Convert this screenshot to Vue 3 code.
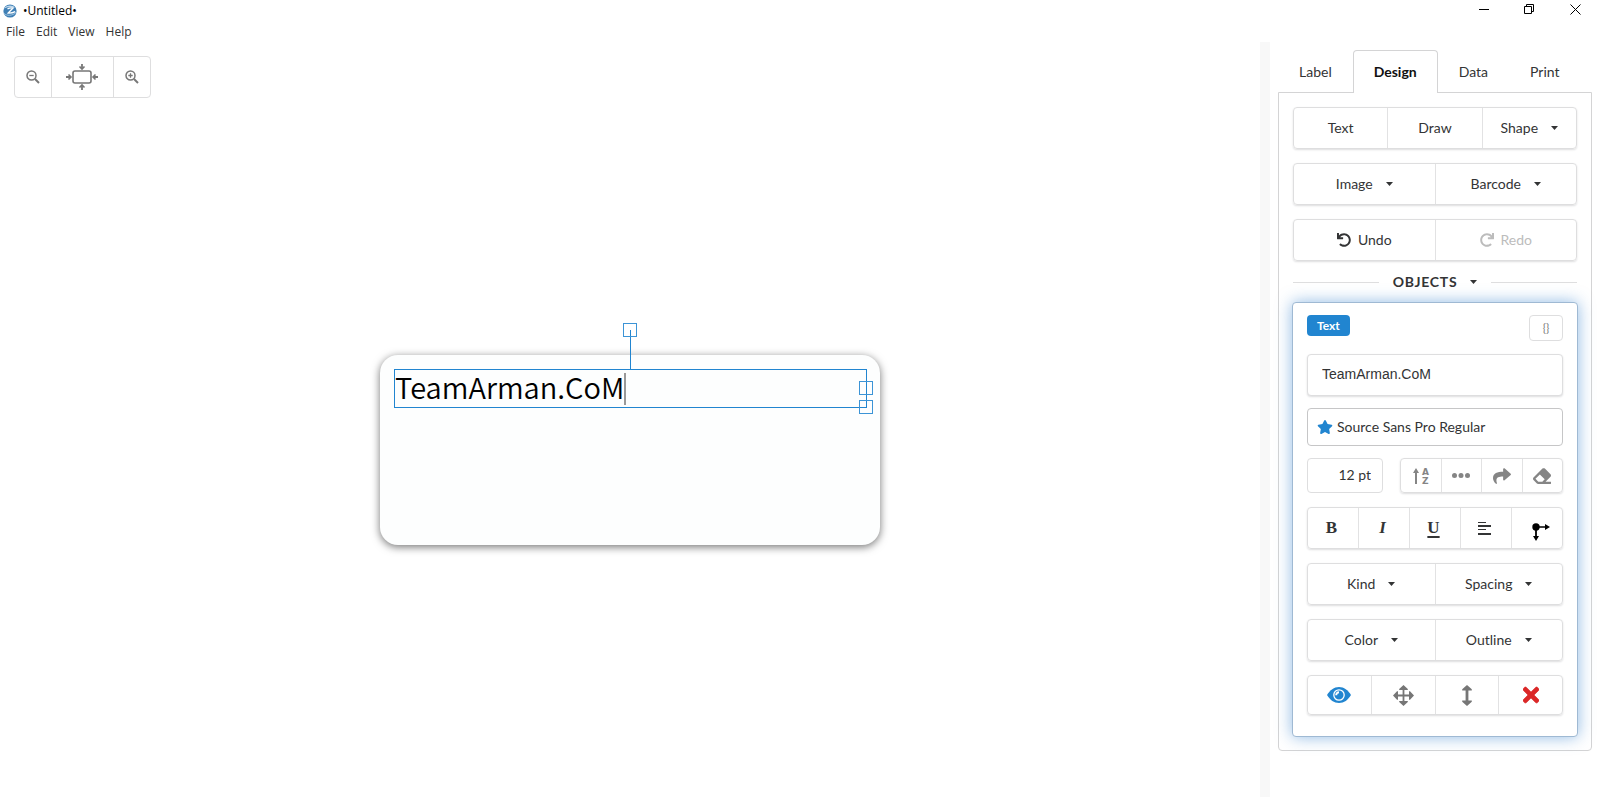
<script setup>
import { ref } from 'vue'

const menus = ['File', 'Edit', 'View', 'Help']
const tabs = ['Label', 'Design', 'Data', 'Print']
const activeTab = ref('Design')

const text = ref('TeamArman.CoM')
const font = ref('Source Sans Pro Regular')
const size = ref('12 pt')

const insertRows = [
  [
    { name: 'Text' },
    { name: 'Draw' },
    { name: 'Shape', menu: true }
  ],
  [
    { name: 'Image', menu: true },
    { name: 'Barcode', menu: true }
  ]
]

const styleRows = [
  ['Kind', 'Spacing'],
  ['Color', 'Outline']
]

const undoPath = 'M212.333 224.333H12c-6.627 0-12-5.373-12-12V12C0 5.373 5.373 0 12 0h48c6.627 0 12 5.373 12 12v78.112C117.773 39.279 184.26 7.47 258.175 8.007c136.906.994 246.448 111.623 246.157 248.532C504.041 393.258 393.12 504 256.333 504c-64.089 0-122.496-24.313-166.51-64.215-5.099-4.622-5.334-12.554-.467-17.42l33.967-33.967c4.474-4.474 11.662-4.717 16.401-.525C170.76 415.336 211.58 432 256.333 432c97.268 0 176-78.716 176-176 0-97.267-78.716-176-176-176-58.496 0-110.28 28.476-142.274 72.333h98.274c6.627 0 12 5.373 12 12v48c0 6.627-5.373 12-12 12z'
</script>

<template>
  <div class="app">
    <header class="titlebar">
      <svg class="logo" width="14" height="14" viewBox="0 0 14 14">
        <circle cx="7" cy="7" r="6.6" fill="#3f7fb5" />
        <path d="M1 4.500C3 1 9 .2 12.500 3.600 9 2.600 5 3 1 4.500z" fill="#b9d5ea" />
        <path d="M4.500 4.800c2-1 4-1.200 5.500-.8L5.200 9c2 .2 4.500-.2 7-1.400" fill="none" stroke="#fff" stroke-width="1.300" />
        <path d="M1 9.500c3 2.500 8 2.500 12-1" fill="none" stroke="#9fc4e0" stroke-width="1" />
      </svg>
      <span class="title">•Untitled•</span>
      <div class="window-controls">
        <button aria-label="Minimize">
          <svg width="11" height="11" viewBox="0 0 11 11"><path d="M1 5.500h10" /></svg>
        </button>
        <button aria-label="Restore">
          <svg width="11" height="11" viewBox="0 0 11 11"><path d="M.5 2.500h7v7h-7zM2.500 2.500v-2h7v7h-2" /></svg>
        </button>
        <button aria-label="Close">
          <svg width="11" height="11" viewBox="0 0 11 11"><path d="M.5.5l10 10M10.500.5l-10 10" /></svg>
        </button>
      </div>
    </header>

    <nav class="menubar">
      <button v-for="m in menus" :key="m">{{ m }}</button>
    </nav>

    <div class="body">
      <main class="workspace">
        <div class="zoom-bar">
          <button aria-label="Zoom out">
            <svg width="14" height="14" viewBox="0 0 14 14" class="line">
              <circle cx="5.500" cy="5.500" r="4.500" stroke-width="1.500" />
              <path d="M3.300 5.500h4.400" stroke-width="1.300" />
              <path d="M9 9l4 4" stroke-width="2" />
            </svg>
          </button>
          <button class="fit" aria-label="Fit to window">
            <svg width="32" height="26" viewBox="0 0 32 26" class="line">
              <rect x="7" y="7" width="18" height="12" rx="2" stroke-width="1.600" />
              <path d="M16 0v4M16 26v-4M0 13h4M32 13h-4" stroke-width="1.800" />
              <path d="M13.500 2.500L16 5l2.500-2.500M13.500 23.500L16 21l2.500 2.500M2.500 10.500L5 13l-2.500 2.500M29.500 10.500L27 13l2.500 2.500" stroke-width="1.600" />
            </svg>
          </button>
          <button aria-label="Zoom in">
            <svg width="14" height="14" viewBox="0 0 14 14" class="line">
              <circle cx="5.500" cy="5.500" r="4.500" stroke-width="1.500" />
              <path d="M3.300 5.500h4.400M5.500 3.300v4.400" stroke-width="1.300" />
              <path d="M9 9l4 4" stroke-width="2" />
            </svg>
          </button>
        </div>

        <div class="stage">
          <div class="label">
            <div class="object">
              <span>{{ text }}</span><i class="cursor"></i>
              <b class="stem"></b>
              <b class="handle rotate"></b>
              <b class="handle side"></b>
              <b class="handle corner"></b>
            </div>
          </div>
        </div>
      </main>

      <aside class="sidebar">
        <div class="tabs">
          <button
            v-for="t in tabs"
            :key="t"
            :class="{ active: t === activeTab }"
            @click="activeTab = t"
          >{{ t }}</button>
        </div>

        <section class="pane">
          <div v-for="(row, i) in insertRows" :key="i" class="group">
            <button v-for="b in row" :key="b.name">
              {{ b.name }}
              <svg v-if="b.menu" class="caret" width="7" height="4" viewBox="0 0 7 4"><path d="M0 0h7L3.500 4z" /></svg>
            </button>
          </div>

          <div class="group">
            <button>
              <svg class="icon" width="14" height="14" viewBox="0 0 512 512"><path :d="undoPath" /></svg>
              Undo
            </button>
            <button disabled>
              <svg class="icon flip" width="14" height="14" viewBox="0 0 512 512"><path :d="undoPath" /></svg>
              Redo
            </button>
          </div>

          <button class="divider">
            <span>OBJECTS</span>
            <svg class="caret" width="7" height="4" viewBox="0 0 7 4"><path d="M0 0h7L3.500 4z" /></svg>
          </button>

          <div class="card">
            <div class="card-head">
              <span class="tag">Text</span>
              <button class="braces">{}</button>
            </div>

            <input v-model="text" class="text-input" type="text" aria-label="Text">

            <label class="font-select">
              <svg width="16" height="14" viewBox="0 0 576 512"><path d="M259.300 17.800L194 150.200 47.900 171.500c-26.200 3.800-36.700 36.100-17.700 54.600l105.700 103-25 145.500c-4.500 26.300 23.200 46 46.400 33.700L288 439.600l130.700 68.700c23.200 12.200 50.900-7.400 46.400-33.700l-25-145.500 105.700-103c19-18.500 8.500-50.800-17.700-54.600L382 150.200 316.700 17.800c-11.700-23.600-45.600-23.900-57.400 0z" /></svg>
              <select v-model="font" aria-label="Font">
                <option>Source Sans Pro Regular</option>
              </select>
            </label>

            <div class="size-row">
              <input v-model="size" type="text" aria-label="Font size">
              <div class="group gray">
                <button aria-label="Auto size">
                  <svg width="18" height="20" viewBox="0 0 18 20">
                    <path d="M3 18V7H1l3-5 3 5H5v11z" />
                    <text x="10" y="9">A</text>
                    <text x="10" y="18">Z</text>
                  </svg>
                </button>
                <button aria-label="More">
                  <svg width="18" height="5" viewBox="0 0 18 5"><circle cx="2.500" cy="2.500" r="2.500" /><circle cx="9" cy="2.500" r="2.500" /><circle cx="15.500" cy="2.500" r="2.500" /></svg>
                </button>
                <button aria-label="Curve">
                  <svg width="18" height="18" viewBox="0 0 512 512"><path d="M503.691 189.836L327.687 37.851C312.281 24.546 288 35.347 288 56.015v80.053C127.371 137.907 0 170.100 0 322.326c0 61.441 39.581 122.309 83.333 154.132 13.653 9.931 33.111-2.533 28.077-18.631C66.066 312.814 132.917 274.316 288 272.085V360c0 20.700 24.300 31.453 39.687 18.164l176.004-152c11.071-9.562 11.086-26.753 0-36.328z" /></svg>
                </button>
                <button aria-label="Clear style">
                  <svg width="18" height="18" viewBox="0 0 512 512"><path d="M497.941 273.941c18.745-18.745 18.745-49.137 0-67.882l-160-160c-18.745-18.745-49.136-18.746-67.883 0l-256 256c-18.745 18.745-18.745 49.137 0 67.882l96 96A48.004 48.004 0 0 0 144 480h356c6.627 0 12-5.373 12-12v-40c0-6.627-5.373-12-12-12H355.883l142.058-142.059zm-302.627-62.627l137.373 137.373L265.373 416H150.628l-80-80 124.686-124.686z" /></svg>
                </button>
              </div>
            </div>

            <div class="group format">
              <button class="bold">B</button>
              <button class="italic">I</button>
              <button class="underline">U</button>
              <button aria-label="Align">
                <svg width="13" height="13" viewBox="0 0 13 13"><path d="M0 0h8v1H0zM0 3h13v2H0zM0 7h8v1H0zM0 11h13v2H0z" /></svg>
              </button>
              <button aria-label="Direction">
                <svg class="direction" width="18" height="18" viewBox="0 0 18 18">
                  <circle cx="4" cy="4" r="3.700" />
                  <path d="M4 3.200h9V1l5 3-5 3V4.800H4.900V13H7l-3 5-3-5h2.100V4z" />
                </svg>
              </button>
            </div>

            <div v-for="row in styleRows" :key="row[0]" class="group">
              <button v-for="name in row" :key="name">
                {{ name }}
                <svg class="caret" width="7" height="4" viewBox="0 0 7 4"><path d="M0 0h7L3.500 4z" /></svg>
              </button>
            </div>

            <div class="group actions">
              <button class="blue" aria-label="Visible">
                <svg width="24" height="16" viewBox="0 0 24 16">
                  <path d="M0 8C3 3 7 0 12 0s9 3 12 8c-3 5-7 8-12 8S3 13 0 8z" />
                  <circle cx="12" cy="8" r="5.200" fill="none" stroke="#fff" stroke-width="1.300" />
                  <path d="M9.200 8.200A2.900 2.900 0 0 1 12 5.200" fill="none" stroke="#fff" stroke-width="2" />
                </svg>
              </button>
              <button aria-label="Move">
                <svg width="21" height="21" viewBox="0 0 21 21"><path d="M10.500 0l4.300 4v1h-3.400v4.600H16V6.200h1l4 4.300-4 4.300h-1v-3.400h-4.600V16h3.400v1l-4.300 4-4.300-4v-1h3.400v-4.600H5v3.400H4l-4-4.300 4-4.300h1v3.400h4.600V5H6.200V4z" /></svg>
              </button>
              <button aria-label="Stretch vertically">
                <svg width="10" height="21" viewBox="0 0 10 21"><path d="M5 0l4.800 4.200v1.300H6.400v10h3.400v1.300L5 21 .2 16.800v-1.300h3.400v-10H.2V4.200z" /></svg>
              </button>
              <button class="red" aria-label="Delete">
                <svg width="16" height="24" viewBox="0 0 352 512"><path stroke="currentColor" stroke-width="14" d="M242.720 256l100.070-100.070c12.280-12.280 12.280-32.190 0-44.480l-22.240-22.240c-12.280-12.280-32.190-12.280-44.480 0L176 189.280 75.930 89.210c-12.280-12.280-32.190-12.280-44.480 0L9.210 111.450c-12.280 12.280-12.280 32.190 0 44.480L109.280 256 9.210 356.070c-12.280 12.280-12.280 32.190 0 44.480l22.240 22.240c12.280 12.280 32.200 12.280 44.480 0L176 322.720l100.070 100.070c12.280 12.280 32.200 12.280 44.480 0l22.240-22.240c12.280-12.280 12.280-32.190 0-44.480L242.720 256z" /></svg>
              </button>
            </div>
          </div>
        </section>
      </aside>
    </div>
  </div>
</template>

<style>
body {
  margin: 0;
  background: #fff;
}
</style>

<style scoped>
.app {
  display: flex;
  flex-direction: column;
  min-height: 100vh;
  font: 14px/18px Lato, sans-serif;
  color: #333435;
}

.app * {
  box-sizing: border-box;
}

button {
  margin: 0;
  padding: 0;
  border: 0;
  background: none;
  color: inherit;
  font: inherit;
}

svg {
  display: block;
  flex: none;
  fill: currentColor;
}

.titlebar {
  display: flex;
  align-items: center;
  height: 22px;
  padding: 0 2px 0 3px;
  font: 12px/20px "Open Sans", sans-serif;
  color: #000;
}

.title {
  margin-left: 6px;
}

.window-controls {
  display: flex;
  align-self: flex-start;
  align-items: center;
  height: 19px;
  margin-left: auto;
}

.window-controls button {
  display: flex;
  justify-content: center;
  width: 46px;
}

.window-controls svg {
  fill: none;
  stroke: #000;
}

.menubar {
  display: flex;
  gap: 11px;
  height: 20px;
  padding: 0 6px;
  font: 12px/20px "Open Sans", sans-serif;
  color: #333;
}

.body {
  display: flex;
  flex: 1;
}

.workspace {
  display: flex;
  flex-direction: column;
  flex: 1;
}

.zoom-bar {
  display: flex;
  align-self: flex-start;
  height: 42px;
  margin: 14px 14px 5px;
  border: 1px solid #dededf;
  border-radius: 4px;
  color: #777;
}

.zoom-bar button {
  display: flex;
  align-items: center;
  justify-content: center;
  width: 36px;
}

.zoom-bar .fit {
  width: 63px;
  padding-right: 2px;
  border: solid #dededf;
  border-width: 0 1px;
}

.line {
  fill: none;
  stroke: currentColor;
}

.stage {
  display: flex;
  flex: 1;
  align-items: center;
  justify-content: center;
}

.label {
  width: 500px;
  height: 190px;
  padding: 14px 13px 14px 14px;
  border-radius: 18px;
  background: #fdfefe;
  box-shadow: 0 2px 8px rgba(0, 0, 0, 0.55);
}

.object {
  position: relative;
  display: flex;
  align-items: center;
  height: 39px;
  border: 1px solid #2185d0;
  font: 350 29px/32px "Noto Sans CJK SC", sans-serif;
  color: #000;
}

.object span {
  padding-bottom: 6px;
}

.cursor {
  width: 2px;
  height: 32px;
  background: #999;
}

.stem {
  position: absolute;
  left: 235px;
  top: -40px;
  width: 1px;
  height: 40px;
  background: #2185d0;
}

.handle {
  position: absolute;
  width: 14px;
  height: 14px;
  border: 1px solid #3c94d6;
}

.rotate {
  left: 228px;
  top: -47px;
}

.side {
  right: -7px;
  top: 11px;
}

.corner {
  right: -7px;
  bottom: -7px;
}

.sidebar {
  width: 340px;
  padding: 8px 8px 0;
  border-left: 10px solid #f8f8f8;
}

.tabs {
  display: flex;
}

.tabs button {
  height: 43px;
  margin-bottom: -1px;
  padding: 0 20px;
  border: 1px solid transparent;
  border-bottom: 0;
}

.tabs .active {
  border-color: #d4d4d5;
  border-radius: 4px 4px 0 0;
  background: #fff;
  font-weight: 700;
  color: #111;
  position: relative;
}

.pane {
  padding: 14px 13px 13px;
  border: 1px solid #d4d4d5;
  border-radius: 0 0 4px 4px;
}

.group {
  display: flex;
  height: 42px;
  margin: 0 1px 14px;
  border: 1px solid #dededf;
  border-radius: 4px;
  box-shadow: 0 1px 2px rgba(34, 36, 38, 0.15);
}

.group button {
  display: flex;
  flex: 1;
  align-items: center;
  justify-content: center;
}

.group button:not(:last-child) {
  border-right: 1px solid #e2e2e3;
}

.group button:disabled {
  color: #bcbcbc;
}

.caret {
  margin-left: 13px;
}

.icon {
  margin-right: 7px;
}

.flip {
  transform: scaleX(-1);
}

.divider {
  display: flex;
  align-items: center;
  width: 100%;
  margin: -2px 0 11px;
  padding: 0 1px;
  font-weight: 700;
  letter-spacing: 0.05em;
}

.divider::before,
.divider::after {
  content: "";
  flex: 1;
  height: 1px;
  background: #dededf;
}

.divider::before {
  margin-right: 14px;
}

.divider::after {
  margin-left: 14px;
}

.card {
  padding: 12px 14px 21px;
  border: 1px solid #9fb9d3;
  border-radius: 4px;
  background: #fff;
  box-shadow: 0 0 16px rgba(70, 140, 210, 0.6);
}

.card-head {
  display: flex;
  align-items: flex-start;
  justify-content: space-between;
  margin-bottom: 13px;
}

.tag {
  padding: 0 10px;
  border-radius: 4px;
  background: #2185d0;
  font-size: 12px;
  font-weight: 700;
  line-height: 21px;
  color: #fff;
}

.braces {
  width: 34px;
  height: 26px;
  border: 1px solid #dededf;
  border-radius: 4px;
  font-size: 11px;
  color: #777;
}

.card .group {
  margin: 0 0 14px;
}

input,
select {
  min-width: 0;
  margin: 0;
  border: 1px solid #dededf;
  border-radius: 4px;
  background: #fff;
  color: inherit;
  font: inherit;
}

.text-input {
  display: block;
  width: 100%;
  height: 42px;
  padding: 0 14px 2px;
  box-shadow: 0 1px 2px rgba(34, 36, 38, 0.15);
  font-family: "Liberation Sans", Arial, sans-serif;
}

.font-select {
  display: flex;
  align-items: center;
  height: 38px;
  margin: 12px 0;
  padding: 0 9px;
  border: 1px solid #c6c6c7;
  border-radius: 4px;
}

.font-select svg {
  fill: #2185d0;
}

.font-select select {
  flex: 1;
  padding: 0 4px;
  border: 0;
  appearance: none;
}

.size-row {
  display: flex;
  justify-content: space-between;
}

.size-row input {
  width: 76px;
  height: 35px;
  padding: 0 11px 2px;
  text-align: right;
}

.size-row .group {
  width: 163px;
  height: 35px;
}

.gray {
  color: #858585;
}

.gray text {
  font: 700 9px "DejaVu Sans", sans-serif;
}

.format {
  font: 700 17px/20px "Liberation Serif", serif;
}

.format button {
  padding-right: 3px;
}

.format .italic {
  font-style: italic;
}

.format .underline {
  text-decoration: underline;
  text-decoration-thickness: 2px;
  text-underline-offset: 3px;
}

.direction {
  margin-left: 10px;
  margin-top: 7px;
  color: #000;
}

.card .actions {
  height: 40px;
  margin-bottom: 0;
  color: #767676;
}

.card .blue {
  color: #2185d0;
}

.card .red {
  color: #db2828;
}
</style>
